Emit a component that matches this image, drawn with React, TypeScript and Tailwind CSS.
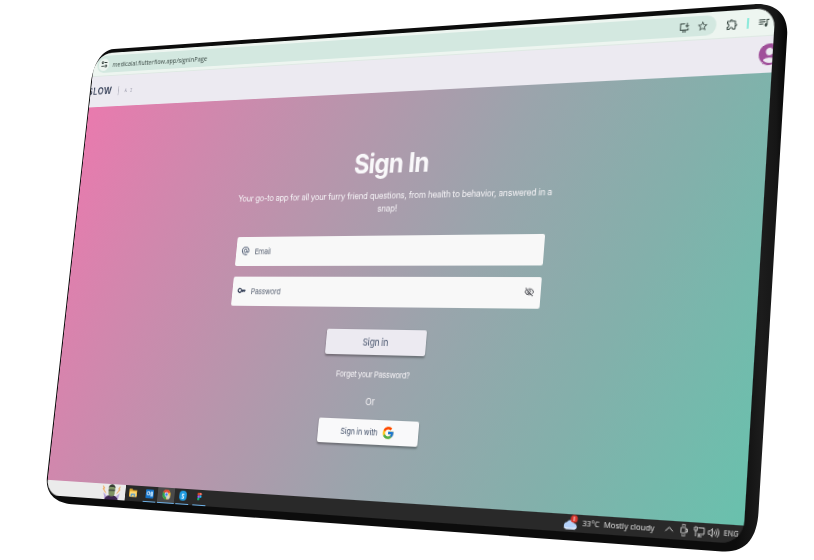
import React from "react";
import {
  MdAlternateEmail,
  MdKey,
  MdOutlineVisibilityOff,
  MdAccountCircle,
  MdStarBorder,
  MdOutlineExtension,
  MdOutlineQueueMusic,
} from "react-icons/md";
import { FcGoogle } from "react-icons/fc";

const SCREEN_W = 768;
const SCREEN_H = 480;

type Point = [number, number];

/** Projects the flat screen rectangle onto four corners (tl, tr, br, bl). */
function project([p0, p1, p2, p3]: [Point, Point, Point, Point]) {
  const dx1 = p1[0] - p2[0];
  const dx2 = p3[0] - p2[0];
  const dx3 = p0[0] - p1[0] + p2[0] - p3[0];
  const dy1 = p1[1] - p2[1];
  const dy2 = p3[1] - p2[1];
  const dy3 = p0[1] - p1[1] + p2[1] - p3[1];
  const den = dx1 * dy2 - dx2 * dy1;
  const g = (dx3 * dy2 - dx2 * dy3) / den;
  const h = (dx1 * dy3 - dx3 * dy1) / den;
  const a = (p1[0] - p0[0] + g * p1[0]) / SCREEN_W;
  const d = (p1[1] - p0[1] + g * p1[1]) / SCREEN_W;
  const b = (p3[0] - p0[0] + h * p3[0]) / SCREEN_H;
  const e = (p3[1] - p0[1] + h * p3[1]) / SCREEN_H;
  return `matrix3d(${a},${d},0,${g / SCREEN_W},${b},${e},0,${h / SCREEN_H},0,0,1,0,${p0[0]},${p0[1]},0,1)`;
}

// The transparent 4px margin around the screen keeps its slanted edges smooth.
const tilt =
  project([
    [95, 53.9],
    [775.5, 7.7],
    [743, 544.2],
    [46, 495],
  ]) + " translate(-4px, -4px)";

function DeviceShell() {
  return (
    <svg className="absolute inset-0" width="814" height="560" viewBox="0 0 814 560">
      <defs>
        <linearGradient id="side" x1="0" x2="1" y1="0" y2="0">
          <stop offset="0.93" stopColor="#0c0c0c" />
          <stop offset="0.965" stopColor="#1c1c1c" />
          <stop offset="0.985" stopColor="#161616" />
          <stop offset="1" stopColor="#050505" />
        </linearGradient>
      </defs>
      <path
        d="M114 49 L754 4.2 C775 2.8 788 14 787.2 34 L758.5 512 C757 538 746 553 722 551.4 L72 504.3 C56 503 45.500 494 46.900 478 L90.800 84 C93 65 101 50 114 49Z"
        fill="url(#side)"
      />
    </svg>
  );
}

function BrowserBar() {
  return (
    <div className="flex h-[26px] items-center border-b border-[#dfe9e4] bg-[#edf5f0] pl-[5px] text-[#3b4a45]">
      <div className="flex h-[19px] w-[708px] items-center rounded-full bg-[#d3e8e0] pl-[2px]">
        <div className="flex h-[14px] w-[14px] items-center justify-center rounded-full bg-[#edf5f0]">
          <svg width="9" height="9" viewBox="0 0 16 16" fill="none" stroke="#2f3b37" strokeWidth="1.8">
            <circle cx="4" cy="4.500" r="2" />
            <path d="M8 4.500h7M1 11.500h7" />
            <circle cx="12" cy="11.500" r="2" />
          </svg>
        </div>
        <span className="mt-[2px] ml-[4.500px] w-[130px] whitespace-nowrap font-['Open_Sans',sans-serif] text-[7.5px] tracking-[-0.09px]">
          medicalai.flutterflow.app/signInPage
        </span>
        <svg className="ml-auto" width="10" height="10" viewBox="0 0 20 20" fill="none" stroke="currentColor" strokeWidth="1.9">
          <path d="M11 3H2.500v12h15v-3.500M6 18h8M15.500 1.500v7.500M12.300 6l3.200 3.200L18.700 6" />
        </svg>
        <MdStarBorder className="mr-[8px] ml-[7px] h-[11.5px] w-[11.5px]" />
      </div>
      <MdOutlineExtension className="ml-[8.500px] h-[12px] w-[12px]" />
      <div className="ml-[8px] h-[10px] w-[2px] bg-[#8eeadb]" />
      <MdOutlineQueueMusic className="ml-[8px] h-[12px] w-[12px]" />
    </div>
  );
}

function SiteHeader() {
  return (
    <div className="flex h-[34px] items-center bg-[#eceaf1] font-[Inter,sans-serif]">
      <span className="-ml-[4px] w-[34px] text-[10.3px] font-semibold tracking-[0.6px] text-[#39435a]">SLOW</span>
      <div className="ml-[7px] h-[10px] w-px bg-[#b9b9c4]" />
      <span className="ml-[7.500px] font-['DejaVu_Sans_Mono',monospace] text-[5.500px] tracking-[0.3px] text-[#9a9bab]">A I</span>
      <MdAccountCircle className="-mr-[9px] ml-auto h-[24px] w-[24px] text-[#a0509a]" />
    </div>
  );
}

function Field({ icon, label, trailing }: { icon: React.ReactNode; label: string; trailing?: React.ReactNode }) {
  return (
    <div className="flex h-[30px] w-[346px] items-center rounded-[2px] bg-[#f8f8f8] pr-[6.5px] pl-[6px] text-[#44516a]">
      {icon}
      <span className="ml-[6px] text-[8px] tracking-[-0.2px] text-[#5d6676]">{label}</span>
      <span className="ml-auto">{trailing}</span>
    </div>
  );
}

function SignInPage() {
  return (
    <div className="flex h-[403.5px] flex-col items-center bg-[linear-gradient(113deg,#e97aae_0%,#b895ac_36%,#9ba4ac_57%,#83b0ab_78%,#69c1ad_100%)] pt-[55.5px] font-[Inter,sans-serif] text-[#f5f3f6]">
      <h1 className="h-[34px] text-[27px] leading-[34px] font-bold tracking-[-0.7px] text-[#f9f8fa]">Sign In</h1>
      <p className="mt-[8px] w-[380px] text-center text-[9px] leading-[13px] tracking-[-0.23px]">
        Your go-to app for all your furry friend questions, from health to behavior, answered in a
        <br />
        snap!
      </p>
      <div className="mt-[21px] flex flex-col gap-[11px]">
        <Field icon={<MdAlternateEmail className="h-[10.5px] w-[10.5px]" />} label="Email" />
        <Field
          icon={<MdKey className="h-[10.5px] w-[10.5px] text-[#26324c]" />}
          label="Password"
          trailing={<MdOutlineVisibilityOff className="h-[10.5px] w-[10.5px] text-[#55565c]" />}
        />
      </div>
      <button className="mt-[22px] h-[25px] w-[111.5px] rounded-[2px] bg-[#eceaf1] pt-[1px] text-[9.3px] tracking-[-0.2px] text-[#44516a] shadow-[0_1.5px_2px_rgba(0,0,0,0.3)]">
        Sign in
      </button>
      <div className="mt-[13.500px] text-[8.2px] leading-[12px] tracking-[-0.3px]">Forget your Password?</div>
      <div className="mt-[13.500px] text-[9.3px] leading-[14px]">Or</div>
      <button className="mt-[10px] flex h-[24.5px] w-[111.5px] items-center justify-center gap-[5px] rounded-[2px] bg-[#f9f9fa] text-[8px] tracking-[-0.2px] text-[#44516a] shadow-[0_1.5px_2px_rgba(0,0,0,0.3)]">
        Sign in with
        <FcGoogle className="h-[14px] w-[14px]" />
      </button>
    </div>
  );
}

function Mascot() {
  return (
    <svg className="ml-[72px]" width="27" height="17" viewBox="0 0 27 17">
      <path d="M2 2l2 2.500-1 1 3 4-4-4 1-1zM24 2l-2 2.500 1 1-3 4 4-4-1-1z" fill="#f29a3f" stroke="#f29a3f" strokeWidth="0.6" />
      <path d="M3 9l4 3 2 4H5zM24 9l-4 3-2 4h4z" fill="#b9a7dc" />
      <path d="M5 17c0-4 4-5.500 8.500-5.500S22 13 22 17z" fill="#3c2450" />
      <rect x="9.500" y="1.500" width="8" height="11" rx="3" fill="#7f9463" />
      <path d="M9.200 4c0-5 8.600-5 8.600 0l-2-1h-5z" fill="#343c32" />
      <path d="M9.500 5.500h8v1.800h-8z" fill="#4c5548" />
    </svg>
  );
}

function TaskIcon({ children, open, active }: { children: React.ReactNode; open?: boolean; active?: boolean }) {
  return (
    <div
      className={`flex h-[16.5px] w-[20.7px] flex-col items-center ${active ? "bg-[#4a4a4a]" : ""}`}
    >
      <div className="flex h-[15px] items-center">{children}</div>
      {open && <div className={`h-[1px] bg-[#6fb2e8] ${active ? "w-full" : "w-[16px]"}`} />}
    </div>
  );
}

function Taskbar() {
  return (
    <div className="flex h-[16.5px] items-center bg-[#292929] font-['Open_Sans',sans-serif] text-[7.6px] text-[#e4e4e4]">
      <div className="h-[16.5px] w-[103px] bg-[#ebebeb]">
        <Mascot />
      </div>
      <TaskIcon>
        <svg width="10" height="9" viewBox="0 0 11 9">
          <path d="M0 0h4l1 1.500h6V9H0z" fill="#e8ae35" />
          <path d="M1 3h9v6H1z" fill="#ffdc79" />
          <path d="M2.500 5.500h6V9H7V7H4v2H2.500z" fill="#3c8fd8" />
        </svg>
      </TaskIcon>
      <TaskIcon open>
        <div className="flex h-[9px] w-[10px] items-center justify-center rounded-[1px] bg-[#1673c8] text-[6px] leading-none font-bold text-white">
          O<span className="ml-[0.5px] h-[5px] w-[3px] bg-[#a8d4f8]" />
        </div>
      </TaskIcon>
      <TaskIcon open active>
        <svg width="10" height="10" viewBox="0 0 20 20">
          <circle cx="10" cy="10" r="10" fill="#f2c230" />
          <path d="M10 10L1.300 5A10 10 0 0 1 18.700 5z" fill="#df4436" />
          <path d="M10 10L1.300 5A10 10 0 0 0 10 20z" fill="#2da350" />
          <circle cx="10" cy="10" r="4.800" fill="#fff" />
          <circle cx="10" cy="10" r="3.600" fill="#3f7fe8" />
          <circle cx="14.500" cy="15" r="4.500" fill="#d8d3c5" />
        </svg>
      </TaskIcon>
      <TaskIcon open>
        <div className="flex h-[9.5px] w-[8.5px] items-center justify-center rounded-[4px] bg-[#1f9be2] text-[7px] leading-none font-bold text-white">
          S
        </div>
      </TaskIcon>
      <TaskIcon open>
        <svg width="5.500" height="7.500" viewBox="0 0 6 9">
          <path d="M1.500 0H3v3H1.500a1.500 1.500 0 0 1 0-3z" fill="#f24e1e" />
          <path d="M3 0h1.500a1.500 1.500 0 0 1 0 3H3z" fill="#ff7262" />
          <path d="M1.500 3H3v3H1.500a1.500 1.500 0 0 1 0-3z" fill="#a259ff" />
          <circle cx="4.500" cy="4.500" r="1.500" fill="#1abcfe" />
          <path d="M1.500 6H3v1.500A1.500 1.500 0 1 1 1.500 6z" fill="#0acf83" />
        </svg>
      </TaskIcon>
      <svg className="ml-auto" width="15" height="15" viewBox="0 0 15 15">
        <path d="M3.500 13.500a3.200 3.200 0 0 1 .3-6.300 4 4 0 0 1 7.200.800 2.800 2.800 0 0 1 .700 5.500z" fill="#b5d2fa" />
        <path d="M1 11.500c3 1 8 1 12.500-.300-.300 1.500-1.200 2.300-2.500 2.300H3.500C2.200 13.500 1.300 12.700 1 11.500z" fill="#e1ecfd" />
        <circle cx="10.800" cy="4" r="3.500" fill="#d7372c" />
        <path d="M10.800 2v4" stroke="#fff" strokeWidth="0.8" />
      </svg>
      <span className="ml-[4px] w-[16.500px] whitespace-nowrap">33°C</span>
      <span className="ml-[4.500px] w-[50px] whitespace-nowrap">Mostly cloudy</span>
      <svg className="ml-[7.500px]" width="9" height="9" viewBox="0 0 9 9" fill="none" stroke="#e0e0e0" strokeWidth="0.9">
        <path d="M1 6.200L4.500 2.700 8 6.200" />
      </svg>
      <svg className="ml-[5px]" width="9" height="11" viewBox="0 0 9 11" fill="none" stroke="#e0e0e0" strokeWidth="0.8">
        <rect x="1.500" y="3" width="4.500" height="5" rx="0.5" />
        <path d="M2 1.200c1.200-.700 2.500-.700 4 0M2 9.800c1.200.700 2.500.700 4 0M6 4.500h1.500v2.500H6" />
      </svg>
      <svg className="ml-[4px]" width="11" height="10" viewBox="0 0 11 10" fill="none" stroke="#e0e0e0" strokeWidth="0.8">
        <path d="M4.500 1.500H10v5.500H4M5.500 7v2M4 9h4M1 1h2.500v3H1zM2.200 4v5" />
      </svg>
      <svg className="ml-[2.500px]" width="11" height="10" viewBox="0 0 11 10" fill="none" stroke="#e0e0e0" strokeWidth="0.8">
        <path d="M1 3.500h1.500l2-2v7l-2-2H1zM6 3.500c.7.800.7 2.200 0 3M7.500 2.300c1.300 1.500 1.300 3.900 0 5.400M9 1.200c2 2.200 2 5.400 0 7.600" />
      </svg>
      <span className="mr-[5px] ml-[4px] w-[13px] text-[6.700px] whitespace-nowrap">ENG</span>
    </div>
  );
}

export default function App() {
  return (
    <div className="relative h-[560px] w-[814px] overflow-hidden bg-white">
      <DeviceShell />
      <div className="absolute top-0 left-0 h-[488px] w-[776px] origin-top-left p-[4px]" style={{ transform: tilt }}>
        <div className="h-[480px] w-[768px] overflow-hidden rounded-tl-[23px] rounded-tr-[18px] rounded-br-[20px] rounded-bl-[17px]">
          <BrowserBar />
          <SiteHeader />
          <SignInPage />
          <Taskbar />
        </div>
      </div>
    </div>
  );
}
